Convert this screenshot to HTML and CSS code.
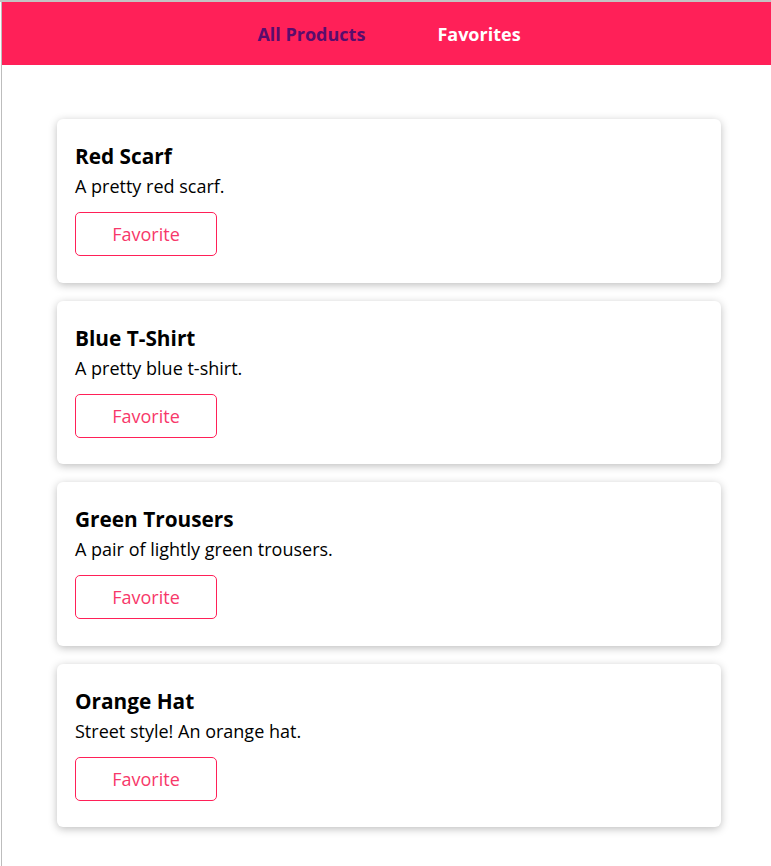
FILE: index.html
```html
<!DOCTYPE html>
<html lang="en">
<head>
<meta charset="utf-8">
<title>Products</title>
<link rel="stylesheet" href="styles.css">
</head>
<body>
<div class="frame">
  <header class="main-header">
    <nav class="main-nav">
      <a class="nav-link active" href="#">All Products</a>
      <a class="nav-link" href="#">Favorites</a>
    </nav>
  </header>
  <main class="products">
    <article class="card">
      <h2 class="card-title">Red Scarf</h2>
      <p class="card-desc">A pretty red scarf.</p>
      <button class="fav-btn">Favorite</button>
    </article>
    <article class="card">
      <h2 class="card-title">Blue T-Shirt</h2>
      <p class="card-desc">A pretty blue t-shirt.</p>
      <button class="fav-btn">Favorite</button>
    </article>
    <article class="card">
      <h2 class="card-title">Green Trousers</h2>
      <p class="card-desc">A pair of lightly green trousers.</p>
      <button class="fav-btn">Favorite</button>
    </article>
    <article class="card">
      <h2 class="card-title">Orange Hat</h2>
      <p class="card-desc">Street style! An orange hat.</p>
      <button class="fav-btn">Favorite</button>
    </article>
  </main>
</div>
</body>
</html>
```
FILE: styles.css
```css
* { box-sizing: border-box; }

html, body {
  margin: 0;
  padding: 0;
  background: #ffffff;
  font-family: "Open Sans", "Noto Sans", sans-serif;
}

body {
  border-top: 2px solid #c3c3c3;
}

.frame {
  min-height: calc(100vh - 2px);
  margin-left: 1px;
  border-left: 1px solid #bdbdbd;
}

.main-header {
  height: 63px;
  background: #ff2058;
  display: flex;
  align-items: center;
  justify-content: center;
  padding-left: 5px;
}

.main-nav {
  display: flex;
  gap: 72px;
  align-items: center;
}

.nav-link {
  font-size: 18px;
  font-weight: 700;
  color: #ffffff;
  text-decoration: none;
}

.nav-link.active {
  color: #5a0c6c;
}

.products {
  width: 664px;
  margin: 54px 0 0 55px;
  display: flex;
  flex-direction: column;
  gap: 18px;
  padding-bottom: 30px;
}

.card {
  background: #fff;
  border-radius: 6px;
  box-shadow: 0 2px 8px rgba(0, 0, 0, 0.26);
  padding: 22px 18px 26.6px;
}

.card-title {
  margin: 0;
  font-size: 20.8px;
  font-weight: 700;
  line-height: 30px;
  color: #000;
}

.card-desc {
  margin: 0 0 11px;
  font-size: 18px;
  line-height: 30px;
  color: #000;
}

.fav-btn {
  display: block;
  width: 142px;
  height: 44px;
  border: 1px solid #ff2058;
  border-radius: 5px;
  background: #fff;
  color: #f7386a;
  font-family: "Open Sans", "Noto Sans", sans-serif;
  font-size: 18px;
  cursor: pointer;
}
```
